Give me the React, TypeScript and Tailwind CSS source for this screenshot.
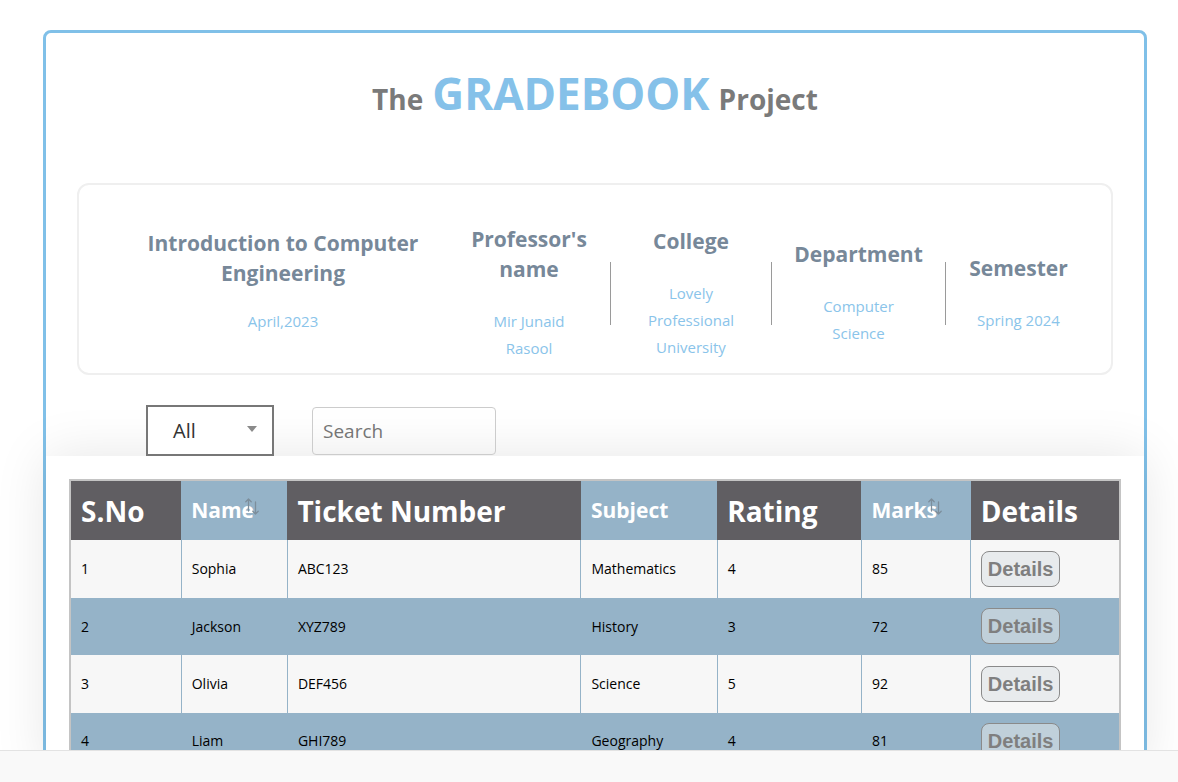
const students = [
  { id: 1, name: 'Sophia', ticket: 'ABC123', subject: 'Mathematics', rating: 4, marks: 85 },
  { id: 2, name: 'Jackson', ticket: 'XYZ789', subject: 'History', rating: 3, marks: 72 },
  { id: 3, name: 'Olivia', ticket: 'DEF456', subject: 'Science', rating: 5, marks: 92 },
  { id: 4, name: 'Liam', ticket: 'GHI789', subject: 'Geography', rating: 4, marks: 81 },
];

const SortIcon = () => (
  <svg width="15" height="17" viewBox="0 0 15 17" fill="none" stroke="#7d8e9b" strokeWidth="1.3" strokeLinecap="round" strokeLinejoin="round" className="-ml-[9px] -mt-[8px] inline-block shrink-0">
    <path d="M3.5 1v12M0.8 3.7L3.5 1l2.7 2.7" />
    <path d="M10.5 4v12M7.8 13.3l2.7 2.7 2.7-2.7" />
  </svg>
);

const InfoCol = ({ title, value, width }: { title: string; value: string; width: string }) => (
  <div className={`${width} flex flex-col items-center text-center`}>
    <h3 className="px-[20px] text-[21px] font-bold leading-[30px] text-[#778899]">{title}</h3>
    <p className="mt-[24px] w-[104px] text-[15px] leading-[27px] text-[#8ac4ea]">{value}</p>
  </div>
);

const Divider = () => <div className="h-[63px] w-px shrink-0 bg-[#9a9a9a]" />;

const App = () => {
  return (
    <div className="min-h-screen bg-white pb-10 font-['Open_Sans',sans-serif]">
      <div className="ml-[43px] mt-[30px] w-[1104px] rounded-[8px] border-[3px] border-[#80c0e8] bg-white pb-10">
        {/* Title */}
        <div className="pt-[27px]">
          <h1 className="flex h-[63px] items-baseline justify-center gap-[9px] font-bold text-[#7a7a7a]">
            <span className="text-[28px]">The</span>
            <span className="text-[44px] text-[#85c1e9]">GRADEBOOK</span>
            <span className="text-[28px]">Project</span>
          </h1>
        </div>

        {/* Course info */}
        <div className="mx-[31px] mt-[60px] flex h-[192px] items-center rounded-xl border-2 border-[#efefef] pl-[39px]">
          <div className="mt-[5px] flex w-[330px] flex-col items-center text-center">
            <h3 className="px-[14px] text-[21px] font-bold leading-[30px] text-[#778899]">
              Introduction to Computer Engineering
            </h3>
            <p className="mt-[20px] text-[15px] leading-[27px] text-[#8ac4ea]">April,2023</p>
          </div>
          <div className="mt-[28px] flex items-center">
            <InfoCol title="Professor's name" value="Mir Junaid Rasool" width="w-[162px]" />
            <Divider />
            <InfoCol title="College" value="Lovely Professional University" width="w-[160px]" />
            <Divider />
            <InfoCol title="Department" value="Computer Science" width="w-[173px]" />
            <Divider />
            <InfoCol title="Semester" value="Spring 2024" width="w-[145px]" />
          </div>
        </div>

        {/* Filters */}
        <div className="mt-[30px] flex h-[51px] items-center pl-[100px]">
          <div className="relative flex h-[51px] w-[128px] items-center border-2 border-[#777] bg-white pl-[25px]">
            <span className="text-[20px] text-[#333]">All</span>
            <span className="absolute right-[15px] top-[19px] h-0 w-0 border-x-[5px] border-t-[6px] border-x-transparent border-t-[#8a8a8a]" />
          </div>
          <input
            type="text"
            placeholder="Search"
            className="ml-[38px] h-[48px] w-[184px] rounded-[4px] border border-[#ccc] px-[10px] text-[19px] text-[#333] placeholder:text-[#757575] focus:outline-none"
          />
        </div>

        {/* Table */}
        <div className="bg-white px-[23px] pt-[23px] shadow-[0_0_50px_rgba(0,0,0,0.1)]">
          <table className="w-full table-fixed border-collapse border-2 border-[#c4c4c4]">
            <colgroup>
              <col className="w-[111px]" />
              <col className="w-[106px]" />
              <col className="w-[293px]" />
              <col className="w-[136px]" />
              <col className="w-[144px]" />
              <col className="w-[109px]" />
              <col className="w-[149px]" />
            </colgroup>
            <thead>
              <tr className="h-[60px] text-left text-white">
                <th className="bg-[#605e62] px-[10px] text-[28px] font-bold">S.No</th>
                <th className="bg-[#95b3c8] px-[10px] text-[21px] font-bold">
                  <span className="inline-flex items-center">Name<SortIcon /></span>
                </th>
                <th className="bg-[#605e62] px-[10px] text-[28px] font-bold">Ticket Number</th>
                <th className="bg-[#95b3c8] px-[10px] text-[21px] font-bold">Subject</th>
                <th className="bg-[#605e62] px-[10px] text-[28px] font-bold">Rating</th>
                <th className="bg-[#95b3c8] px-[10px] text-[21px] font-bold">
                  <span className="inline-flex items-center">Marks<SortIcon /></span>
                </th>
                <th className="bg-[#605e62] px-[10px] text-[28px] font-bold">Details</th>
              </tr>
            </thead>
            <tbody>
              {students.map((s, i) => (
                <tr key={s.id} className={`h-[57.5px] text-[14px] text-black ${i % 2 === 0 ? 'bg-[#f7f7f7]' : 'bg-[#95b3c8]'}`}>
                  <td className="border-r border-[#95b3c8] px-[10px]">{s.id}</td>
                  <td className="border-r border-[#95b3c8] px-[10px]">{s.name}</td>
                  <td className="border-r border-[#95b3c8] px-[10px]">{s.ticket}</td>
                  <td className="border-r border-[#95b3c8] px-[10px]">{s.subject}</td>
                  <td className="border-r border-[#95b3c8] px-[10px]">{s.rating}</td>
                  <td className="border-r border-[#95b3c8] px-[10px]">{s.marks}</td>
                  <td className="px-[10px]">
                    <button className="h-[36px] w-[79px] rounded-[8px] border border-[#8a8a8a] bg-[rgba(222,226,230,0.6)] font-['Liberation_Sans',Arial,sans-serif] text-[20px] font-bold text-[#7f7f7f]">
                      Details
                    </button>
                  </td>
                </tr>
              ))}
            </tbody>
          </table>
        </div>
      </div>

      {/* Bottom bar */}
      <div className="fixed inset-x-0 bottom-0 h-[32px] border-t border-[#e3e3e3] bg-[#f9f9f9]" />
    </div>
  );
};

export default App;
